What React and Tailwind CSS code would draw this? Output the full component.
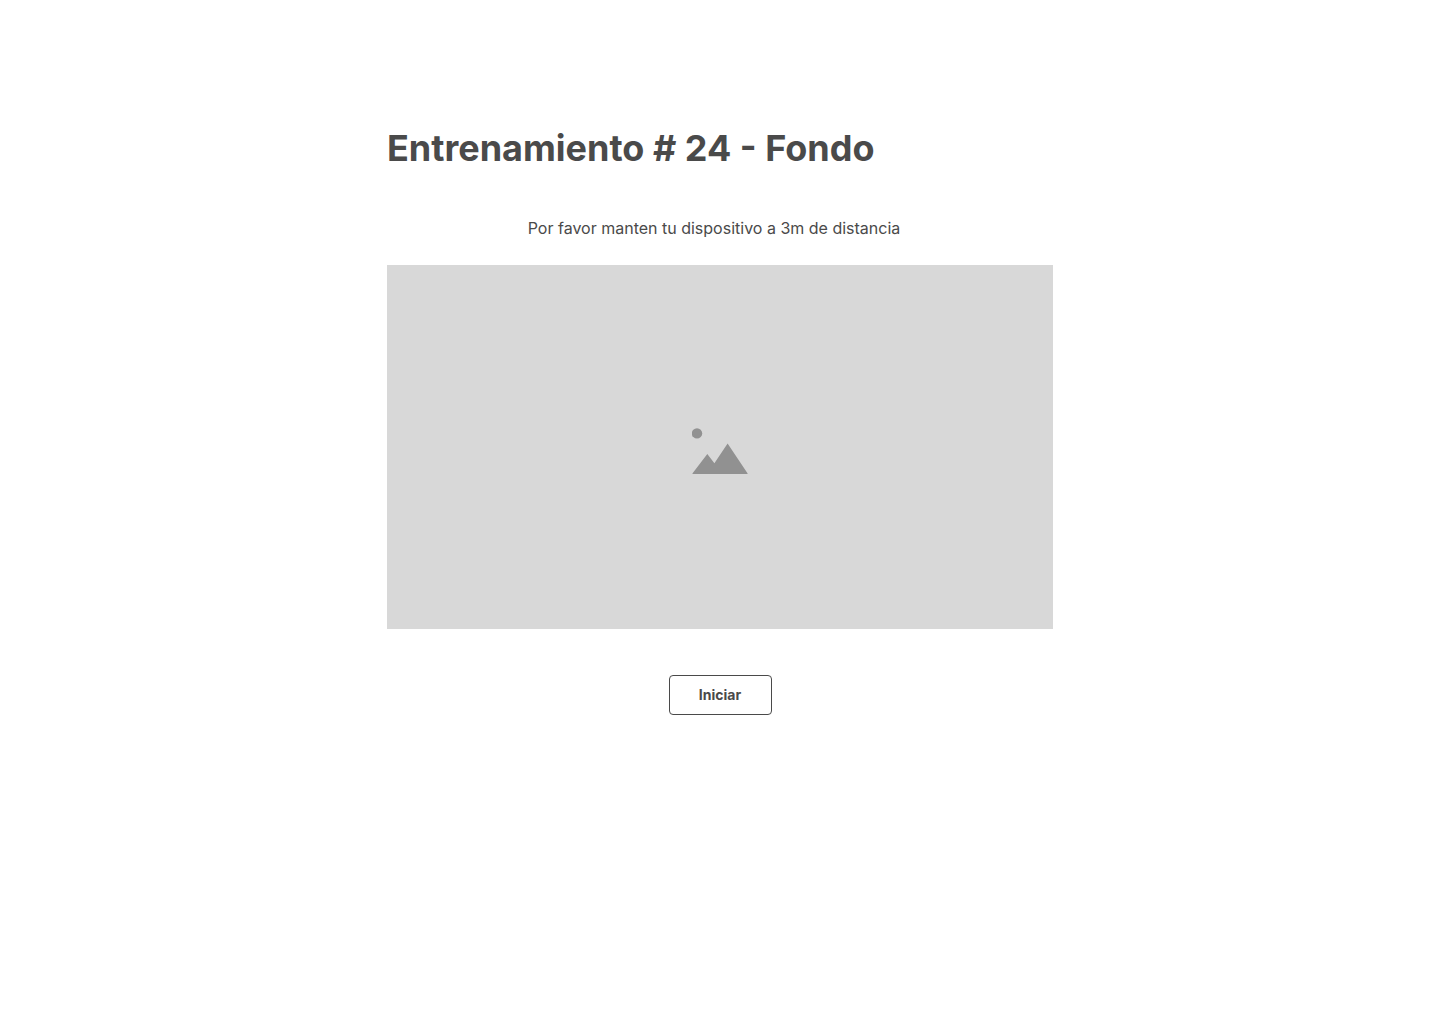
export default function App() {
  return (
    <main className="min-h-screen bg-white px-6 pt-32 pb-12 font-['Inter',sans-serif] text-[#4a4a4a]">
      <div className="mx-auto flex max-w-[666px] flex-col">
        <h1 className="text-4xl leading-10 font-bold">Entrenamiento # 24 - Fondo</h1>
        <p className="mt-12 pr-3 text-center text-base leading-6">
          Por favor manten tu dispositivo a 3m de distancia
        </p>
        <div className="mt-[25px] flex h-[364px] items-center justify-center bg-[#d8d8d8]">
          <svg className="h-[54px] w-14" viewBox="0 0 56 54" fill="#919191" role="img" aria-label="Imagen">
            <circle cx="5" cy="13.400" r="5.200" />
            <path d="M0.800 54Q0 54 0.600 53.200L15.300 34L22.400 43.300L35.600 23.600L55.500 53.200Q56 54 55.200 54Z" />
          </svg>
        </div>
        <button
          type="button"
          className="mt-[46px] h-10 w-[103px] self-center rounded border border-[#4a4a4a] bg-white text-sm leading-5 font-bold"
        >
          Iniciar
        </button>
      </div>
    </main>
  );
}
